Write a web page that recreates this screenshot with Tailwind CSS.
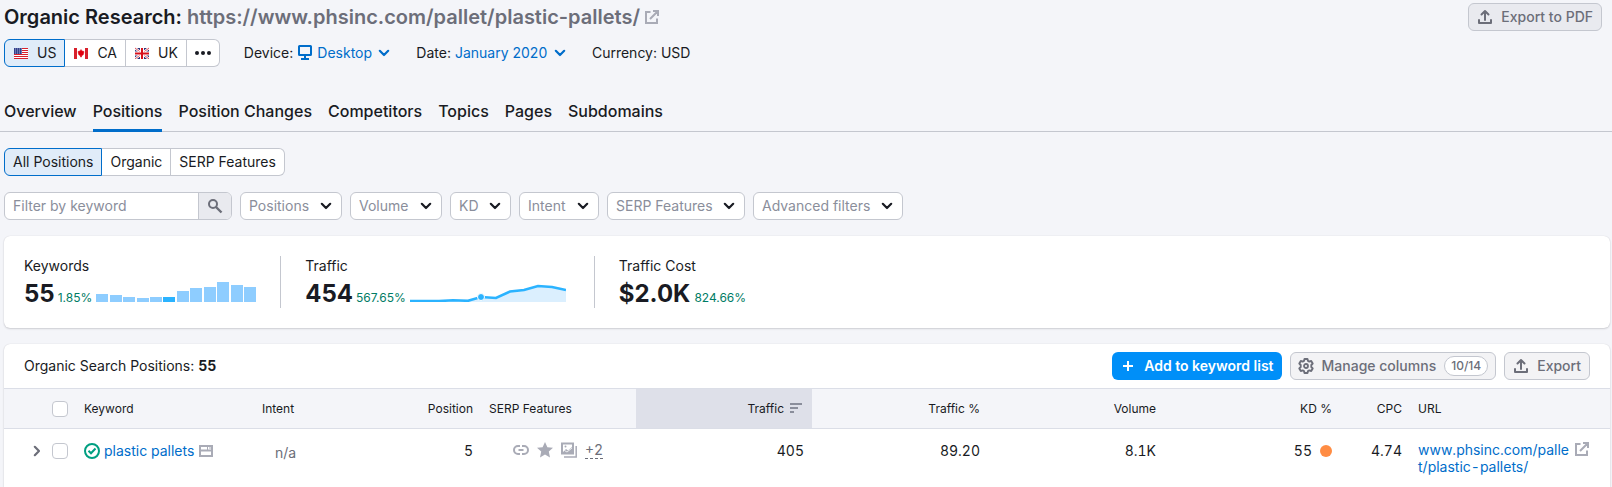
<!DOCTYPE html>
<html lang="en">
<head>
  <meta charset="UTF-8" />
  <meta name="viewport" content="width=device-width, initial-scale=1.0"/>
  <title>Organic Research: Positions</title>
  <script src="https://cdn.jsdelivr.net/npm/@tailwindcss/browser@4"></script>
</head>
<body class="bg-[#f4f5f9] text-[#191b23] font-['Inter',sans-serif] text-sm min-h-screen flex flex-col">

  <!-- Shared icons -->
  <svg class="hidden">
    <symbol id="chevron" viewBox="0 0 16 16"><path d="M3.8 5.8 8 10l4.2-4.2" fill="none" stroke="currentColor" stroke-width="2.2" stroke-linecap="round" stroke-linejoin="round"/></symbol>
    <symbol id="external" viewBox="0 0 16 16"><path d="M6.500 3H2v11h11V9.500M9 2h5v5M14 2 6 10" fill="none" stroke="currentColor" stroke-width="2"/></symbol>
    <symbol id="upload" viewBox="0 0 16 16"><path d="M2 11v3h12v-3M8 11V3M4.500 5.500 8 2l3.500 3.500" fill="none" stroke="currentColor" stroke-width="2" stroke-linecap="round" stroke-linejoin="round"/></symbol>
  </svg>

  <!-- Header -->
  <header class="pl-1 pr-[10px] pt-[3px]">
    <div class="flex justify-between items-start">
      <h1 class="flex items-center text-xl leading-7 font-semibold">Organic Research:&nbsp;<span class="text-[#6c6e79]">https://www.phsinc.com/pallet/plastic-pallets/</span>
        <a href="#" aria-label="Open page" class="ml-1 text-[#a9abb6]"><svg class="size-4"><use href="#external"/></svg></a>
      </h1>
      <button class="flex items-center h-7 px-2 gap-2 border border-[#c4c7cf] rounded-md bg-[#e9eaef] text-[#6c6e79] font-medium"><svg class="size-4"><use href="#upload"/></svg>Export to PDF</button>
    </div>

    <div class="flex items-center mt-2">
      <div class="flex h-7">
        <button class="flex items-center px-2 gap-2 bg-[#e0ecf9] border border-[#006dca] rounded-l-md">
          <svg class="w-4 h-3" viewBox="0 0 16 12">
            <rect x="1" y="1" width="14" height="11" fill="#fff"/>
            <path d="M1 1.500h14M1 3.500h14M1 5.500h14M1 7.500h14M1 9.500h14M1 11.500h14" stroke="#d8202c"/>
            <rect x="1" y="1" width="8" height="6" fill="#33418c"/>
            <path d="M2 2h7M2 4h7M2 6h7" stroke="#a9b0d4" stroke-dasharray="1 1"/>
          </svg>US
        </button>
        <button class="flex items-center px-2 gap-2 bg-white border-y border-r border-[#c4c7cf]">
          <svg class="w-4 h-3" viewBox="0 0 16 12">
            <rect x="1" y="1" width="14" height="11" fill="#fff"/>
            <path d="M1 1h3v11H1zM12 1h3v11h-3z" fill="#d8202c"/>
            <path d="M8 2.500 9 4l2 .5-.6 3L8.500 9v1h-1V9L5.600 7.500 5 4.500 7 4z" fill="#e00010" stroke="#e00010" stroke-width=".5"/>
          </svg>CA
        </button>
        <button class="flex items-center px-2 gap-2 bg-white border-y border-r border-[#c4c7cf]">
          <svg class="w-4 h-3" viewBox="0 0 16 12">
            <rect x="1" y="1" width="14" height="11" fill="#29337a"/>
            <path d="m1 1 14 11M15 1 1 12" stroke="#fff" stroke-width="2.400"/>
            <path d="m1 1 14 11M15 1 1 12" stroke="#d8202c" stroke-width=".8"/>
            <path d="M8 1v11M1 6.500h14" stroke="#fff" stroke-width="4"/>
            <path d="M8 1v11M1 6.500h14" stroke="#d8101c" stroke-width="2"/>
          </svg>UK
        </button>
        <button aria-label="More countries" class="flex items-center px-2 bg-white border-y border-r border-[#c4c7cf] rounded-r-md">
          <svg class="size-4" viewBox="0 0 16 16" fill="currentColor"><circle cx="2" cy="8" r="2"/><circle cx="8" cy="8" r="2"/><circle cx="14" cy="8" r="2"/></svg>
        </button>
      </div>

      <div class="flex items-center ml-6">
        <label for="device" class="mr-1">Device:</label>
        <svg class="size-4 text-[#006dca]" viewBox="0 0 16 16" fill="none" stroke="currentColor" stroke-width="2"><rect x="2" y="1" width="12" height="9" rx=".5"/><path d="M8 10v3M4 14h8"/></svg>
        <div class="relative flex items-center text-[#006dca]">
          <select id="device" class="appearance-none pl-1 pr-6"><option>Desktop</option></select>
          <svg class="absolute right-1 size-4 pointer-events-none"><use href="#chevron"/></svg>
        </div>
      </div>
      <div class="flex items-center ml-5">
        <label for="date">Date:</label>
        <div class="relative flex items-center text-[#006dca]">
          <select id="date" class="appearance-none pl-1 pr-6"><option>January 2020</option></select>
          <svg class="absolute right-1 size-4 pointer-events-none"><use href="#chevron"/></svg>
        </div>
      </div>
      <span class="ml-5">Currency: USD</span>
    </div>
  </header>

  <!-- Tabs -->
  <nav class="flex gap-4 mt-[27px] pl-1 border-b border-[#c4c7cf] text-base font-medium">
    <a href="#" class="h-[37px] leading-[34px]">Overview</a>
    <a href="#" class="h-[38px] -mb-px leading-[34px] border-b-3 border-[#006dca]">Positions</a>
    <a href="#" class="leading-[34px]">Position Changes</a>
    <a href="#" class="leading-[34px]">Competitors</a>
    <a href="#" class="leading-[34px]">Topics</a>
    <a href="#" class="leading-[34px]">Pages</a>
    <a href="#" class="leading-[34px]">Subdomains</a>
  </nav>

  <main class="pl-1 pr-[2px] pt-4 grow flex flex-col">
    <div class="flex h-7">
      <button class="px-2 bg-[#e0ecf9] border border-[#006dca] rounded-l-md">All Positions</button>
      <button class="px-2 bg-white border-y border-r border-[#c4c7cf]">Organic</button>
      <button class="px-2 bg-white border-y border-r border-[#c4c7cf] rounded-r-md">SERP Features</button>
    </div>

    <!-- Filters -->
    <form class="flex gap-2 mt-4 text-[#8a8e9b]">
      <div class="flex h-7 w-[228px] border border-[#c4c7cf] rounded-md bg-white overflow-hidden">
        <input type="text" aria-label="Filter by keyword" placeholder="Filter by keyword" class="grow min-w-0 px-2 outline-none placeholder:text-[#8a8e9b]">
        <button type="button" aria-label="Search" class="w-[33px] shrink-0 flex items-center justify-center border-l border-[#c4c7cf] bg-[#e9eaef] text-[#6c6e79]">
          <svg class="size-4" viewBox="0 0 16 16" fill="none" stroke="currentColor" stroke-width="2"><circle cx="6" cy="6" r="4"/><path d="m9 9 5.500 5.500" stroke-width="2.400"/></svg>
        </button>
      </div>
      <div class="relative flex items-center">
        <select aria-label="Positions" class="appearance-none h-7 pl-2 pr-[31px] border border-[#c4c7cf] rounded-md bg-white"><option>Positions</option></select>
        <svg class="absolute right-2 size-4 pointer-events-none text-[#191b23]"><use href="#chevron"/></svg>
      </div>
      <div class="relative flex items-center">
        <select aria-label="Volume" class="appearance-none h-7 pl-2 pr-8 border border-[#c4c7cf] rounded-md bg-white"><option>Volume</option></select>
        <svg class="absolute right-2 size-4 pointer-events-none text-[#191b23]"><use href="#chevron"/></svg>
      </div>
      <div class="relative flex items-center">
        <select aria-label="KD" class="appearance-none h-7 pl-2 pr-[31px] border border-[#c4c7cf] rounded-md bg-white"><option>KD</option></select>
        <svg class="absolute right-2 size-4 pointer-events-none text-[#191b23]"><use href="#chevron"/></svg>
      </div>
      <div class="relative flex items-center">
        <select aria-label="Intent" class="appearance-none h-7 pl-2 pr-8 border border-[#c4c7cf] rounded-md bg-white"><option>Intent</option></select>
        <svg class="absolute right-2 size-4 pointer-events-none text-[#191b23]"><use href="#chevron"/></svg>
      </div>
      <div class="relative flex items-center">
        <select aria-label="SERP Features" class="appearance-none h-7 pl-2 pr-[31px] border border-[#c4c7cf] rounded-md bg-white"><option>SERP Features</option></select>
        <svg class="absolute right-2 size-4 pointer-events-none text-[#191b23]"><use href="#chevron"/></svg>
      </div>
      <div class="relative flex items-center">
        <select aria-label="Advanced filters" class="appearance-none h-7 pl-2 pr-[31px] border border-[#c4c7cf] rounded-md bg-white"><option>Advanced filters</option></select>
        <svg class="absolute right-2 size-4 pointer-events-none text-[#191b23]"><use href="#chevron"/></svg>
      </div>
    </form>

    <!-- Summary -->
    <section class="flex mt-4 p-5 bg-white rounded-md shadow-[0_0_1px_rgba(25,27,35,0.16),0_1px_2px_rgba(25,27,35,0.16)]">
      <div class="h-[52px] pr-6 border-r border-[#c4c7cf]">
        <h2 class="leading-5">Keywords</h2>
        <div class="flex items-end gap-[3px]">
          <strong class="text-2xl leading-9 -mb-1 h-9">55</strong>
          <span class="text-xs leading-5 text-[#007c65]">1.85%</span>
          <svg class="w-[160px] h-[22px] mb-[6px] ml-px" viewBox="0 0 160 22" fill="#8ecdff">
            <path d="M0 14h12v8H0zM14 15h12v7H14zM27 17h12v5H27zM41 18h12v4H41zM54 17h12v5H54zM81 11h12v11H81zM94 8h12v14H94zM108 7h12v15h-12zM121 2h12v20h-12zM135 5h12v17h-12zM148 7h12v15h-12z"/>
            <path d="M67 17h12v5H67z" fill="#2bb3ff"/>
          </svg>
        </div>
      </div>
      <div class="h-[52px] pl-6 pr-7 border-r border-[#c4c7cf]">
        <h2 class="leading-5">Traffic</h2>
        <div class="flex items-end gap-[3px]">
          <strong class="text-2xl leading-9 -mb-1 h-9">454</strong>
          <span class="text-xs leading-5 text-[#007c65]">567.65%</span>
          <svg class="w-[156px] h-[22px] mb-[6px] ml-px" viewBox="0 0 156 22">
            <path d="M0 21h29l14-.7 15 .5L71 17l15 1 14-6.500 14-1.500 14-4 14 1 14 3v12H0z" fill="#dbeffe"/>
            <path d="M0 21h29l14-.7 15 .5L71 17l15 1 14-6.500 14-1.500 14-4 14 1 14 3" fill="none" stroke="#2bb3ff" stroke-width="2.600"/>
            <circle cx="71" cy="17" r="3.500" fill="#2bb3ff" stroke="#fff"/>
          </svg>
        </div>
      </div>
      <div class="h-[52px] pl-6">
        <h2 class="leading-5">Traffic Cost</h2>
        <div class="flex items-end gap-1">
          <strong class="text-2xl leading-9 -mb-1 h-9">$2.0K</strong>
          <span class="text-xs leading-5 text-[#007c65]">824.66%</span>
        </div>
      </div>
    </section>

    <!-- Positions table -->
    <section class="grow mt-4 bg-white rounded-t-md shadow-[0_0_1px_rgba(25,27,35,0.16),0_1px_2px_rgba(25,27,35,0.16)]">
      <div class="flex items-center gap-2 py-2 px-5">
        <h2 class="grow">Organic Search Positions: <b>55</b></h2>
        <button class="flex items-center h-7 px-2 gap-2 rounded-md bg-[#008ff8] text-white font-semibold"><svg class="size-4" viewBox="0 0 16 16" stroke="currentColor" stroke-width="2"><path d="M8 3v10M3 8h10"/></svg>Add to keyword list</button>
        <button class="flex items-center h-7 px-[7px] gap-2 border border-[#c4c7cf] rounded-md bg-[#f3f3f5] text-[#6c6e79] font-medium">
          <svg class="size-4" viewBox="0 0 16 16" fill="none" stroke="currentColor"><path d="M6.500 1h3l.5 1.900 1.300.7 1.900-.6 1.500 2.500L13.300 7v2l1.400 1.500-1.500 2.500-1.900-.6-1.300.7-.5 1.900h-3L6 13.100l-1.300-.7-1.900.6-1.500-2.500L2.700 9V7L1.300 5.500 2.800 3l1.900.6L6 2.900z" stroke-width="1.900" stroke-linejoin="round"/><circle cx="8" cy="8" r="2" stroke-width="1.800"/></svg>
          Manage columns
          <span class="h-5 px-[6px] flex items-center border border-[#c4c7cf] rounded-full bg-white text-xs">10/14</span>
        </button>
        <button class="flex items-center h-7 px-2 gap-2 border border-[#c4c7cf] rounded-md bg-[#f3f3f5] text-[#6c6e79] font-medium"><svg class="size-4"><use href="#upload"/></svg>Export</button>
      </div>

      <table class="w-full table-fixed text-right">
        <colgroup>
          <col class="w-[72px]"><col class="w-[178px]"><col class="w-[150px]"><col class="w-[77px]"><col class="w-[155px]">
          <col><col><col><col>
          <col class="w-[70px]"><col class="w-[200px]">
        </colgroup>
        <thead class="text-xs bg-[#f4f5f9] border-y border-[#dbdee7]">
          <tr class="h-10 [&>th]:font-normal [&>th]:px-2">
            <th><input type="checkbox" aria-label="Select all" class="block ml-auto appearance-none size-4 border border-[#c4c7cf] rounded bg-white"></th>
            <th class="text-left">Keyword</th>
            <th class="text-left">Intent</th>
            <th>Position</th>
            <th class="text-left">SERP Features</th>
            <th class="bg-[#dee0e9]"><span class="flex items-center justify-end gap-1">Traffic
              <svg class="size-4 text-[#8a8e9b]" viewBox="0 0 16 16" stroke="currentColor" stroke-width="2"><path d="M2 3h12M2 7h8M2 11h4"/></svg></span></th>
            <th>Traffic %</th>
            <th>Volume</th>
            <th>KD %</th>
            <th>CPC</th>
            <th class="text-left">URL</th>
          </tr>
        </thead>
        <tbody>
          <tr class="align-top [&>td]:px-2 [&>td]:pt-3 leading-5 tabular-nums">
            <td><div class="flex items-center justify-end gap-[7px] h-5">
              <button aria-label="Expand row" class="text-[#6c6e79]"><svg class="size-4 -rotate-90"><use href="#chevron"/></svg></button>
              <input type="checkbox" aria-label="Select plastic pallets" class="appearance-none size-4 border border-[#c4c7cf] rounded bg-white">
            </div></td>
            <td><div class="flex items-center gap-1">
              <svg class="size-4 text-[#009f81]" viewBox="0 0 16 16" fill="none" stroke="currentColor" stroke-width="2"><circle cx="8" cy="8" r="7"/><path d="m4.500 7.800 2.500 2.500L11.500 5.500"/></svg>
              <a href="#" class="text-[#006dca]">plastic pallets</a>
              <svg class="size-4 text-[#a9abb6]" viewBox="0 0 16 16" fill="none" stroke="currentColor" stroke-width="2"><path d="M2 3h12v10H2z"/><path d="M2 7.500h12"/><path d="M9.500 4v3M12 4v2" stroke-width="1"/></svg>
            </div></td>
            <td class="text-left text-[#6c6e79]"><span class="block pl-[13px] pt-[2px]">n/a</span></td>
            <td>5</td>
            <td><div class="flex items-center gap-2 pl-6 text-[#a9abb6]">
              <svg class="size-4" viewBox="0 0 16 16" fill="none" stroke="currentColor" stroke-width="2"><path d="M7 4H5a4 4 0 0 0 0 8h2M9 4h2a4 4 0 0 1 0 8H9M5.500 8h5"/></svg>
              <svg class="size-4" viewBox="0 0 16 16" fill="currentColor"><path d="m8 0 2.400 5.200 5.600.6-4.200 3.800L13 15.400l-5-3-5 3 1.200-5.800L0 5.800l5.600-.6z"/></svg>
              <svg class="size-4" viewBox="0 0 16 16" fill="none" stroke="currentColor" stroke-width="2"><path d="M1 1.500h11v10H1z"/><path d="M15.200 4v11H3" stroke-width="1.500"/><path d="m2 10 3-3 2 1.500L11 5v6H2z" fill="currentColor" stroke="none"/><circle cx="4.500" cy="4.500" r="1" fill="currentColor" stroke="none"/><path d="m3.500 8.500 2.500 1.500L11 6" stroke="#fff" stroke-width=".8"/></svg>
              <button class="h-[18px] leading-4 border-b border-dashed border-[#6c6e79] text-[#6c6e79]">+2</button>
            </div></td>
            <td>405</td>
            <td>89.20</td>
            <td>8.1K</td>
            <td><div class="flex items-center justify-end gap-2">55<span class="size-3 rounded-full bg-[#ff8c43]"></span></div></td>
            <td>4.74</td>
            <td class="text-left"><div class="flex items-start gap-1 pr-3">
              <a href="#" class="w-[152px] leading-[17px] break-all text-[#006dca]">www.phsinc.com/pallet/plastic-pallets/</a>
              <a href="#" aria-label="Open URL" class="shrink-0 text-[#a9abb6]"><svg class="size-4"><use href="#external"/></svg></a>
            </div></td>
          </tr>
        </tbody>
      </table>
    </section>
  </main>

</body>
</html>
